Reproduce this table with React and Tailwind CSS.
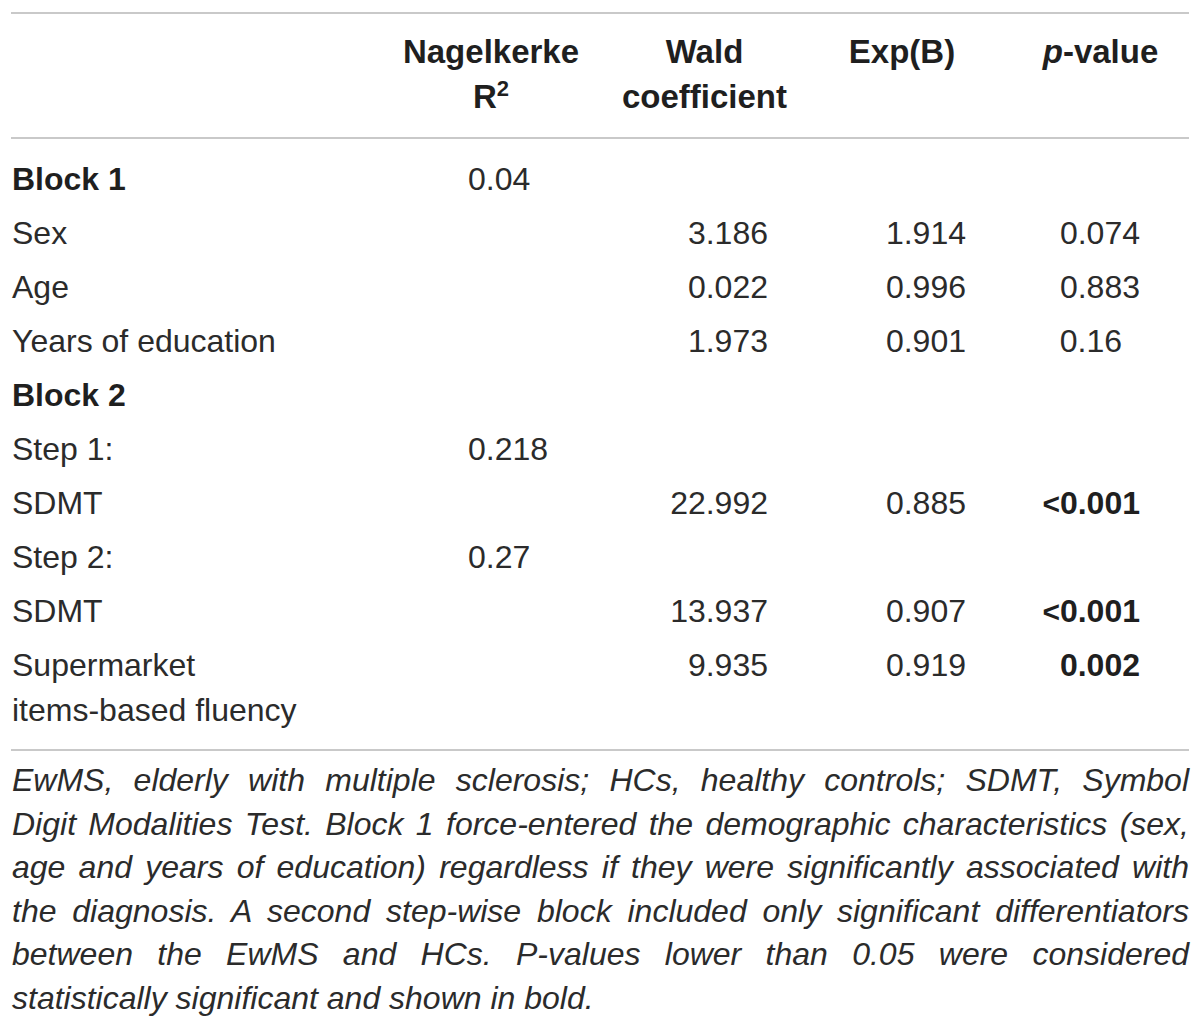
const rows = [
  { label: "Block 1", bold: true, r2: "0.04" },
  { label: "Sex", wald: "3.186", exp: "1.914", p: "0.074" },
  { label: "Age", wald: "0.022", exp: "0.996", p: "0.883" },
  { label: "Years of education", wald: "1.973", exp: "0.901", p: "0.16", short: true },
  { label: "Block 2", bold: true },
  { label: "Step 1:", r2: "0.218" },
  { label: "SDMT", wald: "22.992", exp: "0.885", p: "0.001", lt: true, sig: true },
  { label: "Step 2:", r2: "0.27" },
  { label: "SDMT", wald: "13.937", exp: "0.907", p: "0.001", lt: true, sig: true },
  {
    label: (
      <>
        Supermarket
        <br />
        items-based fluency
      </>
    ),
    wald: "9.935",
    exp: "0.919",
    p: "0.002",
    sig: true,
  },
];

const captionLines = [
  "EwMS, elderly with multiple sclerosis; HCs, healthy controls; SDMT, Symbol",
  "Digit Modalities Test. Block 1 force-entered the demographic characteristics (sex,",
  "age and years of education) regardless if they were significantly associated with",
  "the diagnosis. A second step-wise block included only significant differentiators",
  "between the EwMS and HCs. P-values lower than 0.05 were considered",
];

const grid = "grid grid-cols-[390px_180px_247px_148px_211px]";

const App = () => {
  return (
    <main className="w-[1200px] h-[1027px] bg-white pt-3 px-[11px] font-['Liberation_Sans',Arial,sans-serif] text-[#2b2b2b] overflow-hidden">
      {/* Header */}
      <div
        className={`${grid} border-t-2 border-b-2 border-[#c9c9c9] pt-[15px] pb-[18px] text-[33px] leading-[45px] font-bold text-[#1f1f1f]`}
      >
        <div />
        <div className="text-center">
          Nagelkerke
          <br />
          R<sup className="text-[22px] -top-[12px]">2</sup>
        </div>
        <div className="text-center">
          Wald
          <br />
          coefficient
        </div>
        <div className="text-center">Exp(B)</div>
        <div className="text-center pl-[38px]">
          <i>p</i>-value
        </div>
      </div>

      {/* Body */}
      <div className="border-b-2 border-[#c9c9c9] pt-[13px] pb-[12px] text-[32px] leading-[45px]">
        {rows.map((row, i) => (
          <div key={i} className={`${grid} py-[4.5px]`}>
            <div className={`pl-[1px] ${row.bold ? "font-bold text-[#1f1f1f]" : ""}`}>{row.label}</div>
            <div className="pl-[67px]">{row.r2}</div>
            <div className="text-right pr-[60px]">{row.wald}</div>
            <div className="text-right pr-[10px]">{row.exp}</div>
            <div className={`text-right ${row.short ? "pr-[65px]" : "pr-[47px]"}`}>
              {row.lt && <span className="text-[30px] font-bold text-[#1f1f1f]">&lt;</span>}
              {row.p && <span className={row.sig ? "font-bold text-[#1f1f1f]" : ""}>{row.p}</span>}
            </div>
          </div>
        ))}
      </div>

      {/* Caption */}
      <div className="pt-[8px] pl-[1px] text-[32px] leading-[43.5px] italic">
        {captionLines.map((line, i) => (
          <div key={i} className="text-justify [text-align-last:justify]">
            {line}
          </div>
        ))}
        <div>statistically significant and shown in bold.</div>
      </div>
    </main>
  );
};

export default App;
